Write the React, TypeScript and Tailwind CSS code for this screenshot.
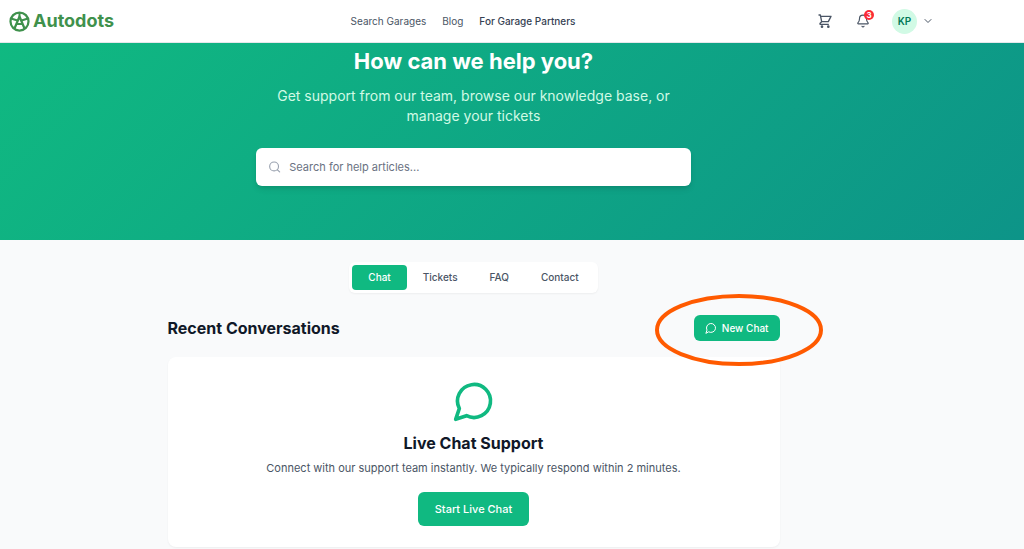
import { Bell, ChevronDown, Search } from "lucide-react";

type NavItem = {
  label: string;
  href: string;
  strong?: boolean;
};

const navItems: NavItem[] = [
  { label: "Search Garages", href: "#garages" },
  { label: "Blog", href: "#blog" },
  { label: "For Garage Partners", href: "#partners", strong: true },
];

const tabs = ["Chat", "Tickets", "FAQ", "Contact"];

type IconProps = {
  className: string;
};

const ChatIcon: React.FC<IconProps> = ({ className }) => (
  <svg
    viewBox="0 0 24 24"
    className={className}
    fill="none"
    stroke="currentColor"
    strokeWidth="2"
    strokeLinecap="round"
    strokeLinejoin="round"
  >
    <path d="M7.9 20A9 9 0 1 0 4 16.1L2 22Z" />
  </svg>
);

const CartIcon: React.FC<IconProps> = ({ className }) => (
  <svg
    viewBox="0 0 24 24"
    className={className}
    fill="none"
    stroke="currentColor"
    strokeWidth="2"
    strokeLinecap="round"
    strokeLinejoin="round"
  >
    <path d="M3 3h2l.4 2M7 13h10l4-8H5.4M7 13L5.4 5M7 13l-2.3 2.3c-.6.6-.2 1.7.7 1.7H17" />
    <circle cx="7.5" cy="20.5" r="1" />
    <circle cx="17" cy="20.5" r="1" />
  </svg>
);

const Logo: React.FC = () => (
  <a href="#home" className="flex items-center gap-[3px] text-[#3f914c]">
    <svg viewBox="0 0 42 42" className="h-[21px] w-[21px]" fill="none" stroke="currentColor">
      <circle cx="21" cy="21" r="18" strokeWidth="4.5" />
      <path d="M11 35 L21 11 L31 35" strokeWidth="4.5" strokeLinejoin="round" />
      <path d="M15 26 H27" strokeWidth="4" />
      <path d="M21 11 V3 M4 15 L17 19 M38 15 L25 19" strokeWidth="4" />
    </svg>
    <span className="text-lg leading-5 font-bold">Autodots</span>
  </a>
);

const Header: React.FC = () => (
  <header className="border-b border-gray-200 bg-white pr-[77px]">
    <div className="flex h-[42px] items-center justify-between px-[9px]">
      <Logo />
      <nav className="flex items-center gap-4 text-[10px] text-gray-600">
        {navItems.map((item) => (
          <a
            key={item.label}
            href={item.href}
            className={item.strong ? "font-medium text-gray-700" : "font-normal"}
          >
            {item.label}
          </a>
        ))}
      </nav>
      <div className="flex items-center gap-3 text-gray-600">
        <button type="button" aria-label="Cart" className="p-[5px]">
          <CartIcon className="h-4 w-4" />
        </button>
        <button type="button" aria-label="Notifications" className="relative p-1.5">
          <Bell className="h-3.5 w-3.5" />
          <span className="absolute top-0.5 right-0.5 flex h-2.5 w-2.5 items-center justify-center rounded-full bg-red-500 text-[8px] leading-none font-bold text-white">
            3
          </span>
        </button>
        <button type="button" aria-label="Account menu" className="flex items-center gap-[5px] px-1">
          <span className="flex h-[25px] w-[25px] items-center justify-center rounded-full bg-[#d1fae5] text-[10px] font-semibold text-[#047857]">
            KP
          </span>
          <ChevronDown className="h-3 w-3" />
        </button>
      </div>
    </div>
  </header>
);

const Hero: React.FC = () => (
  <section className="bg-[linear-gradient(135deg,#10b981,#0d9488)] pr-[77px] pb-[54px] text-center">
    <h1 className="pt-1 text-[22px] leading-7 font-bold text-white">How can we help you?</h1>
    <p className="mx-auto mt-[11px] max-w-[435px] px-4 text-sm leading-5 text-[#d1fae5]">
      Get support from our team, browse our knowledge base, or manage your tickets
    </p>
    <label className="mx-auto mt-[22px] flex h-[38px] max-w-[435px] items-center gap-2 rounded-md bg-white px-3 shadow-md">
      <Search className="h-3.5 w-3.5 text-gray-400" />
      <input
        type="search"
        aria-label="Search for help articles"
        placeholder="Search for help articles..."
        className="w-full text-[11px] leading-4 text-gray-900 placeholder-gray-500 outline-none"
      />
    </label>
  </section>
);

const Tabs: React.FC = () => (
  <div className="mx-auto flex w-fit rounded-md bg-white p-[3px] shadow-xs">
    {tabs.map((tab, index) => (
      <button
        key={tab}
        type="button"
        className={
          index === 0
            ? "rounded-sm bg-[#10b981] px-4 py-[5px] text-[10px] leading-[15px] font-medium text-white"
            : "rounded-sm px-4 py-[5px] text-[10px] leading-[15px] font-medium text-gray-600"
        }
      >
        {tab}
      </button>
    ))}
  </div>
);

const NewChat: React.FC = () => (
  <div className="relative">
    <button
      type="button"
      className="flex h-[26px] items-center gap-[5px] rounded-md bg-[#10b981] px-[11px] text-[10px] font-medium text-white"
    >
      <ChatIcon className="h-3 w-3" />
      New Chat
    </button>
    <svg
      viewBox="0 0 168 74"
      className="pointer-events-none absolute -top-[22px] -left-[39px] h-[74px] w-[168px] max-w-none"
      fill="none"
      stroke="#ff5a00"
      strokeWidth="4"
    >
      <ellipse cx="84" cy="37" rx="82" ry="34" />
    </svg>
  </div>
);

const App: React.FC = () => (
  <div className="min-h-screen bg-[#f9fafb] font-['Inter',sans-serif]">
    <Header />
    <Hero />
    <main className="pr-[77px]">
      <div className="mx-auto max-w-[612px] pt-[22px]">
        <Tabs />
        <div className="mt-[22px] flex items-center justify-between">
          <h2 className="text-base font-bold text-gray-900">Recent Conversations</h2>
          <NewChat />
        </div>
        <section className="mt-4 flex flex-col items-center rounded-lg bg-white pt-[22px] pb-[21px] shadow-xs">
          <ChatIcon className="h-11 w-11 text-[#10b981]" />
          <h3 className="mt-2 text-base font-bold text-gray-900">Live Chat Support</h3>
          <p className="mt-[5px] text-[11px] leading-4 text-gray-600">
            Connect with our support team instantly. We typically respond within 2 minutes.
          </p>
          <button
            type="button"
            className="mt-4 h-[34px] rounded-md bg-[#10b981] px-[17px] text-[11px] font-medium text-white"
          >
            Start Live Chat
          </button>
        </section>
      </div>
    </main>
  </div>
);

export default App;
